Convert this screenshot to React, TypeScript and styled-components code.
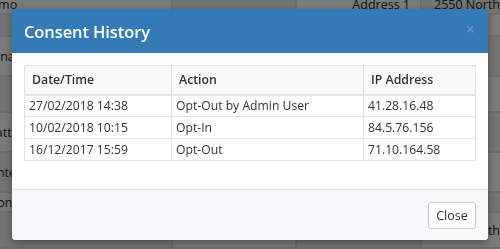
import React from "react";
import styled, { createGlobalStyle } from "styled-components";

const Global = createGlobalStyle`
  html, body { margin: 0; padding: 0; width: 500px; height: 249px; overflow: hidden; background: #fff; }
  body { font-family: "Open Sans", "Noto Sans", Arial, sans-serif; color: #333; }
  * { box-sizing: border-box; }
`;

const Page = styled.div`
  width: 500px;
  height: 249px;
  overflow: hidden;
  background: #f4f4f4;
`;

const BgTable = styled.div`
  display: grid;
  grid-template-columns: 191px 124px 125px 200px;
  margin-left: -18px;
  margin-top: -5px;
  font-size: 12.5px;
  color: #222;
`;

const BgCell = styled.div<{ $alt?: boolean; $h: number; $right?: boolean }>`
  height: ${(p) => p.$h}px;
  padding: 0 10px 0 0;
  display: flex;
  align-items: center;
  justify-content: ${(p) => (p.$right ? "flex-end" : "flex-start")};
  white-space: nowrap;
  overflow: hidden;
  background: ${(p) => (p.$alt ? "#e8e8e8" : "#f6f6f6")};
  border-bottom: 2px solid #dcdcdc;
  border-right: 2px solid #d8d8d8;
`;

const Overlay = styled.div`
  position: fixed;
  inset: 0;
  background: rgba(0, 0, 0, 0.5);
`;

const Modal = styled.div`
  position: fixed;
  left: 12px;
  top: 9px;
  width: 476px;
  background: #fff;
  border-radius: 0 0 4px 4px;
  box-shadow: 0 3px 8px rgba(0, 0, 0, 0.35);
  overflow: hidden;
`;

const Header = styled.div`
  height: 44px;
  background: #337ab7;
  display: flex;
  align-items: center;
  justify-content: space-between;
  padding: 0 12px;
`;

const Title = styled.h4`
  margin: 0;
  font-size: 16.5px;
  font-weight: 600;
  color: #fff;
  letter-spacing: -0.1px;
`;

const CloseX = styled.span`
  font-size: 16px;
  font-weight: 600;
  color: #6a98c5;
  line-height: 1;
  margin-top: -5px;
  margin-right: 1px;
`;

const Body = styled.div`
  padding: 12px 12px 28px 12px;
`;

const Table = styled.table`
  width: 452px;
  border-collapse: collapse;
  font-size: 12px;
  border: 1px solid #e3e3e3;
`;

const Th = styled.th`
  height: 29px;
  background: #f9f9f9;
  text-align: left;
  font-weight: 600;
  font-size: 12.3px;
  padding: 0 7px;
  border: 1px solid #e3e3e3;
  border-bottom-width: 2px;
`;

const Td = styled.td`
  height: 22px;
  padding: 0 4px;
  border: 1px solid #e3e3e3;
  white-space: nowrap;
  font-size: 12.2px;
`;

const Footer = styled.div`
  height: 51px;
  background: #f7f8fa;
  border-top: 1px solid #e5e5e5;
  display: flex;
  align-items: center;
  justify-content: flex-end;
  padding: 0 12px;
`;

const Button = styled.button`
  width: 48px;
  height: 27px;
  margin-top: 1px;
  background: #fff;
  border: 1px solid #ccc;
  border-radius: 3px;
  font-family: inherit;
  font-size: 12.5px;
  color: #333;
  padding: 0;
`;

const rows = [
  ["27/02/2018 14:38", "Opt-Out by Admin User", "41.28.16.48"],
  ["10/02/2018 10:15", "Opt-In", "84.5.76.156"],
  ["16/12/2017 15:59", "Opt-Out", "71.10.164.58"],
];

const bg: { h: number; cells: string[] }[] = [
  { h: 20, cells: ["Demo", "", "Address 1", "2550 North Lake"] },
  { h: 22, cells: ["", "", "", ""] },
  { h: 40, cells: ["Manager", "", "", ""] },
  { h: 36, cells: ["", "", "", ""] },
  { h: 40, cells: ["Seattle", "", "", ""] },
  { h: 40, cells: ["Center", "", "", ""] },
  { h: 20, cells: ["Phone", "", "", "Address"] },
  { h: 36, cells: ["", "", "", "2550 North"] },
  { h: 40, cells: ["", "", "", ""] },
];

export default function App() {
  return (
    <Page>
      <Global />
      <BgTable>
        {bg.map((r, i) =>
          r.cells.map((c, j) => (
            <BgCell
              key={`${i}-${j}`}
              $h={r.h}
              $alt={(i + j) % 2 === 1}
              $right={j === 2}
              style={j === 0 ? { paddingLeft: 0 } : { paddingLeft: 12 }}
            >
              {c}
            </BgCell>
          ))
        )}
      </BgTable>
      <Overlay />
      <Modal>
        <Header>
          <Title>Consent History</Title>
          <CloseX>×</CloseX>
        </Header>
        <Body>
          <Table>
            <colgroup>
              <col style={{ width: 147 }} />
              <col style={{ width: 192 }} />
              <col />
            </colgroup>
            <thead>
              <tr>
                <Th>Date/Time</Th>
                <Th>Action</Th>
                <Th>IP Address</Th>
              </tr>
            </thead>
            <tbody>
              {rows.map((r) => (
                <tr key={r[0]}>
                  {r.map((c) => (
                    <Td key={c}>{c}</Td>
                  ))}
                </tr>
              ))}
            </tbody>
          </Table>
        </Body>
        <Footer>
          <Button>Close</Button>
        </Footer>
      </Modal>
    </Page>
  );
}
